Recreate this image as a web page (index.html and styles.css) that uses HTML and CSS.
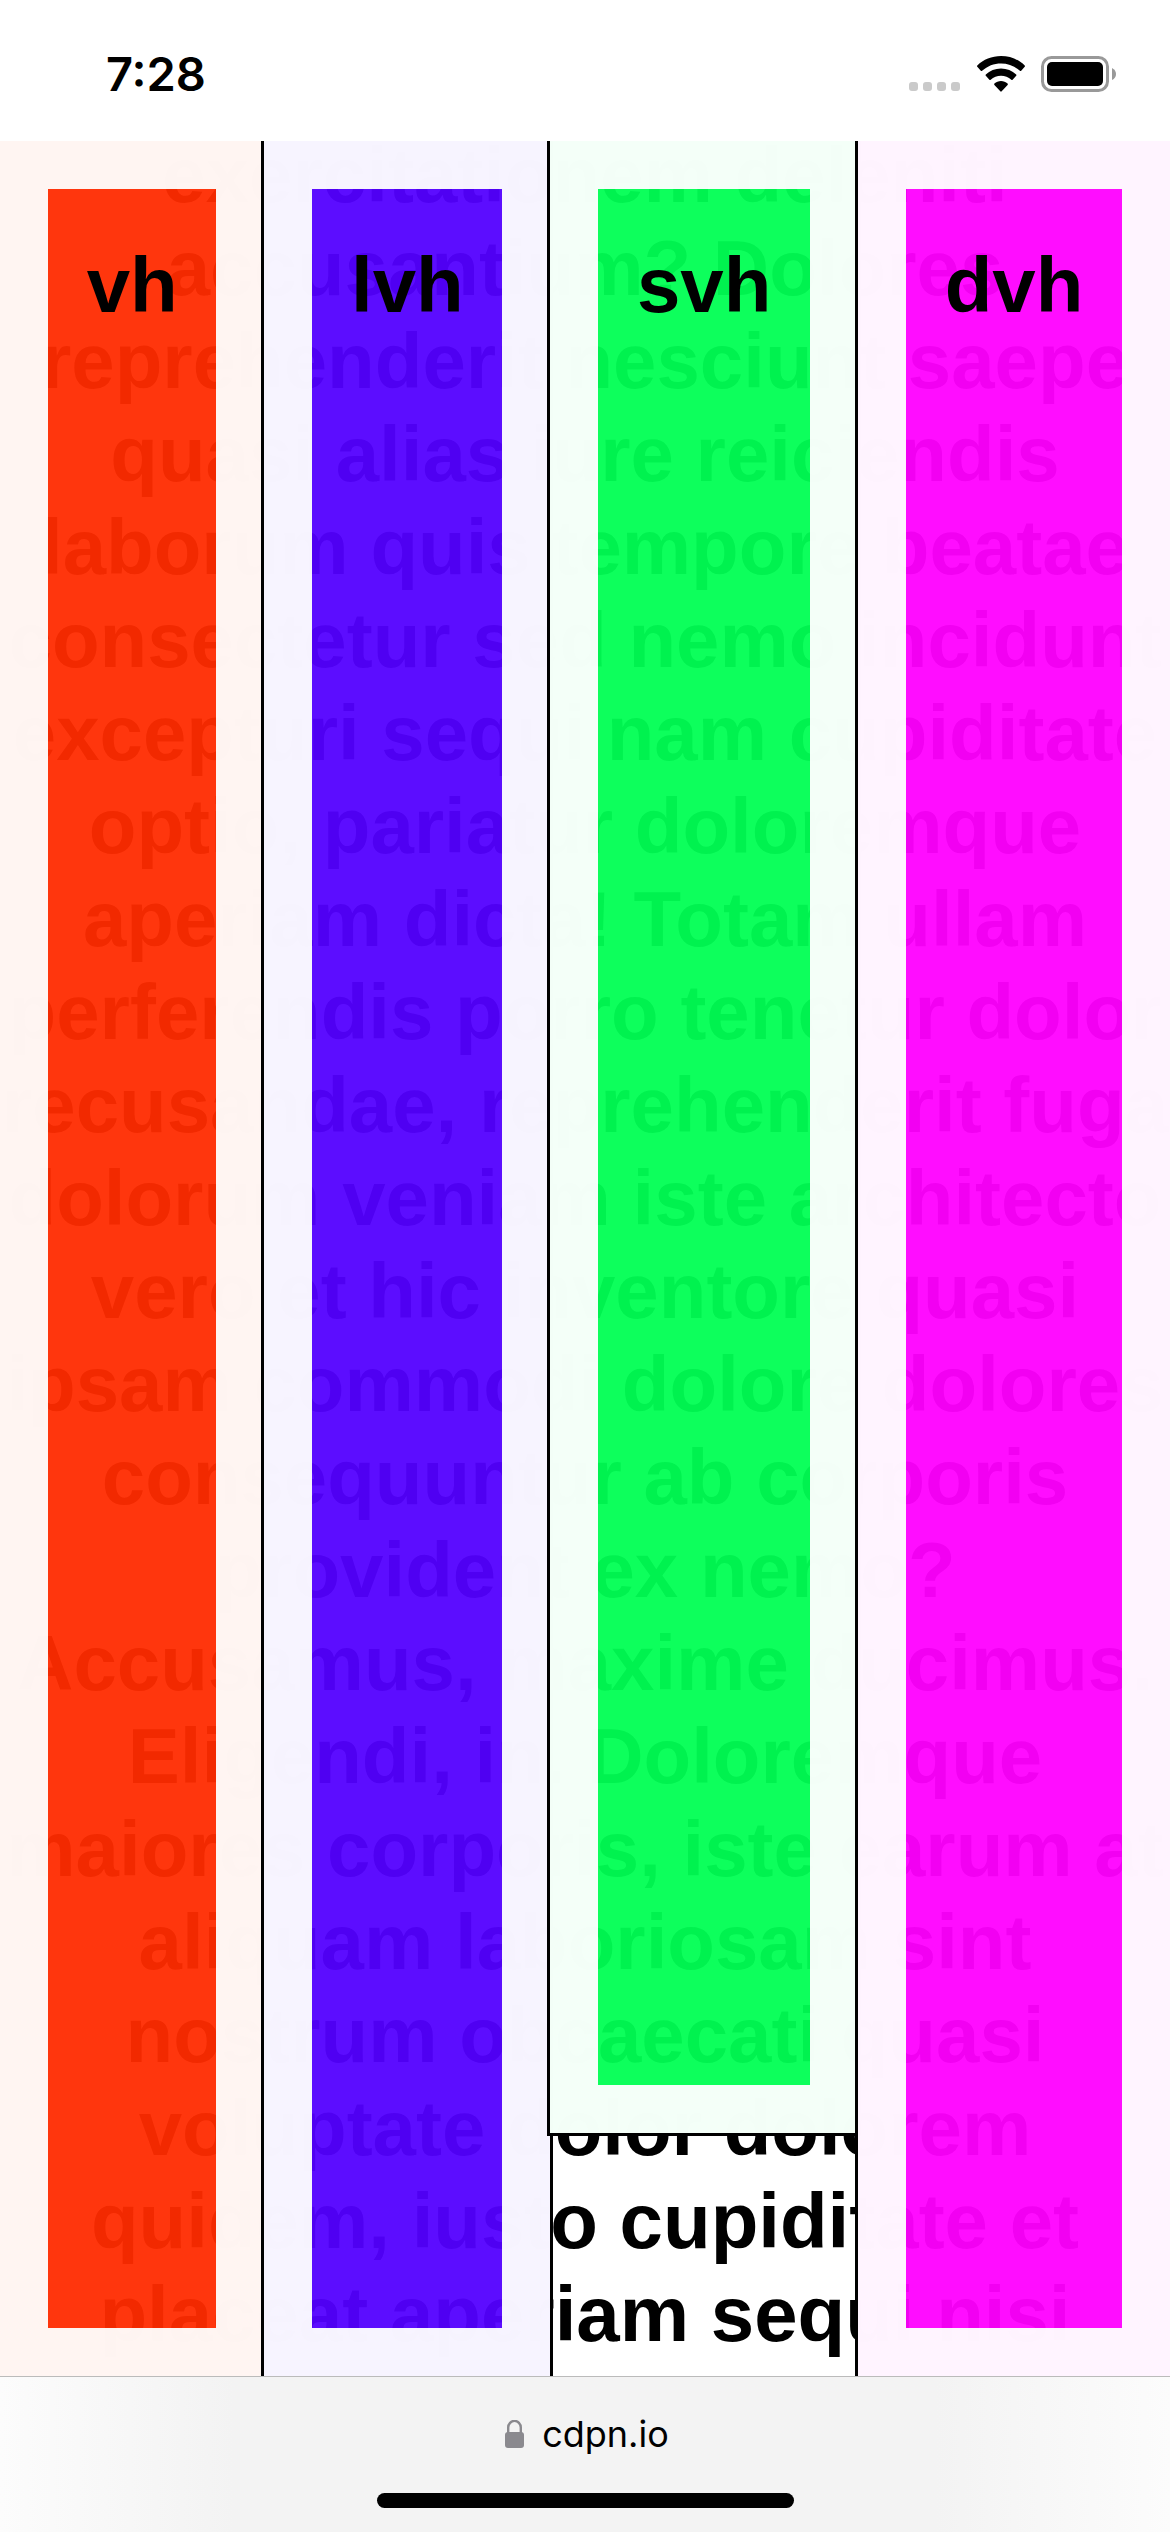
FILE: index.html
```html
<!DOCTYPE html>
<html lang="en">
<head>
<meta charset="utf-8">
<meta name="viewport" content="width=device-width, initial-scale=1">
<title>Viewport units</title>
<link rel="stylesheet" href="styles.css">
</head>
<body>
<header class="status">
  <time class="clock">7:28</time>
  <div class="indicators">
    <svg class="signal" width="52" height="36" viewBox="0 0 52 36" aria-label="No signal">
      <g fill="#cacaca"><rect x="0" y="26" width="9" height="9" rx="3"/><rect x="14" y="26" width="9" height="9" rx="3"/><rect x="28" y="26" width="9" height="9" rx="3"/><rect x="42" y="26" width="9" height="9" rx="3"/></g>
    </svg>
    <svg class="wifi" width="48" height="36" viewBox="0 0 48 36" aria-label="Wi-Fi">
      <path d="M24 0C33.200 0 41.600 3.400 47.700 9.500Q48.300 10.200 47.700 10.800L44.200 14.800Q43.600 15.400 42.900 14.800C37.600 9.900 31.100 7.400 24 7.400S10.400 9.900 5.100 14.800Q4.400 15.400 3.800 14.800L.3 10.800Q-.3 10.200.3 9.500C6.400 3.400 14.800 0 24 0Z"/>
      <path d="M24 12.600C29.900 12.600 35.100 14.700 39.200 18.500Q39.800 19.200 39.200 19.800L35.600 23.700Q35 24.300 34.300 23.700C31.400 21.100 27.900 19.800 24 19.800S16.600 21.100 13.700 23.700Q13 24.300 12.400 23.700L8.800 19.800Q8.200 19.200 8.800 18.500C12.900 14.700 18.100 12.600 24 12.600Z"/>
      <path d="M24 25C26.500 25 28.700 25.900 30.600 27.600Q31.200 28.300 30.600 28.900L24.700 35.300Q24 36 23.300 35.300L17.400 28.900Q16.800 28.300 17.400 27.600C19.300 25.900 21.500 25 24 25Z"/>
    </svg>
    <svg class="battery" width="75" height="36" viewBox="0 0 75 36" aria-label="Battery full">
      <rect x="1.500" y="1.500" width="65" height="33" rx="9" fill="none" stroke="#999" stroke-width="3"/>
      <rect x="6" y="6" width="56" height="24" rx="5"/>
      <path d="M71 12q4 2 4 6t-4 6z" fill="#999"/>
    </svg>
  </div>
</header>

<main class="stage">
  <p class="filler">exercitationem deleniti<br>accusantium? Dolores<br>reprehenderit nesciunt saepe<br>quasi alias iure reiciendis<br>laborum quis tempore beatae<br>consectetur sed nemo incidunt<br>excepturi sequi nam cupiditate<br>optio, pariatur doloremque<br>aperiam dicta! Totam ullam<br>perferendis porro tenetur dolor<br>recusandae, reprehenderit fuga<br>dolorum veniam iste architecto<br>vero et hic inventore quasi<br>ipsam commodi dolore dolores<br>consequuntur ab corporis<br>provident ex nemo?<br>Accusamus, maxime ducimus.<br>Eligendi, in. Doloremque<br>maiores corporis, iste earum at<br>aliquam laboriosam sint<br>nostrum obcaecati quasi<br>voluptate dolor dolorem<br>quidem, iusto cupiditate et<br>placeat aperiam sequi nisi</p>
  <div class="units">
    <section class="unit vh"><h2>vh</h2></section>
    <section class="unit lvh"><h2>lvh</h2></section>
    <section class="unit svh"><h2>svh</h2></section>
    <section class="unit dvh"><h2>dvh</h2></section>
  </div>
</main>

<footer class="toolbar">
  <a class="address" href="#">
    <svg width="19" height="28" viewBox="0 0 19 28" aria-hidden="true">
      <path d="M3.200 13V7.500a6.300 6.600 0 0 1 12.600 0V13" fill="none" stroke="#8a898e" stroke-width="2.400"/>
      <rect x="0" y="12" width="19" height="16" rx="3" fill="#8a898e"/>
    </svg>
    cdpn.io
  </a>
  <div class="home-bar"></div>
</footer>
</body>
</html>
```
FILE: styles.css
```css
* {
  box-sizing: border-box;
}

body {
  margin: 0;
  height: 100vh;
  display: flex;
  flex-direction: column;
  background: #fff;
  color: #000;
  font-family: "Liberation Sans", Arial, sans-serif;
}

.status {
  flex: none;
  height: 141px;
  padding: 6px 54px 0 106px;
  display: flex;
  align-items: center;
  justify-content: space-between;
}

.clock {
  font: 600 47px/56px Inter, sans-serif;
}

.indicators {
  display: flex;
  align-items: center;
  gap: 16px;
}

.stage {
  flex: 1;
  min-height: 0;
  display: grid;
  grid-template: minmax(0, 1fr) / minmax(0, 1fr);
  overflow: hidden;
}

.filler,
.units {
  grid-area: 1 / 1;
}

.filler {
  align-self: end;
  margin: 0;
  padding-bottom: 15px;
  font-size: 78px;
  font-weight: 700;
  line-height: 93px;
  text-align: center;
  white-space: nowrap;
}

.units {
  display: flex;
}

.unit {
  position: relative;
  flex: 1 1 auto;
  border: 48px solid var(--edge);
  background: var(--fill);
  background-clip: padding-box;
  box-shadow: 0 0 0 3px #000;
}

.unit h2 {
  margin: 0;
  padding-top: 50px;
  font-size: 78px;
  line-height: 93px;
  text-align: center;
}

.vh {
  --fill: rgb(255 43 0 / 95%);
  --edge: rgb(255 245 242 / 99.5%);
}

.lvh {
  --fill: rgb(83 0 255 / 95%);
  --edge: rgb(247 244 255 / 99.5%);
}

.svh {
  --fill: rgb(0 255 83 / 95%);
  --edge: rgb(244 255 248 / 99.5%);
  margin-bottom: 243px;
}

.dvh {
  --fill: rgb(255 0 255 / 95%);
  --edge: rgb(255 244 255 / 99.5%);
}

.toolbar {
  flex: none;
  height: 156px;
  padding: 35px 0 24px;
  display: flex;
  flex-direction: column;
  align-items: center;
  justify-content: space-between;
  border-top: 1px solid #bbb;
  background: linear-gradient(90deg, #fcfcfc, #f3f3f3 20%, #f3f3f3 80%, #fcfcfc);
}

.address {
  display: flex;
  align-items: center;
  gap: 18px;
  padding-left: 4px;
  color: #000;
  font: 36px/44px Inter, sans-serif;
  text-decoration: none;
}

.home-bar {
  width: 417px;
  height: 15px;
  border-radius: 8px;
  background: #000;
}
```
